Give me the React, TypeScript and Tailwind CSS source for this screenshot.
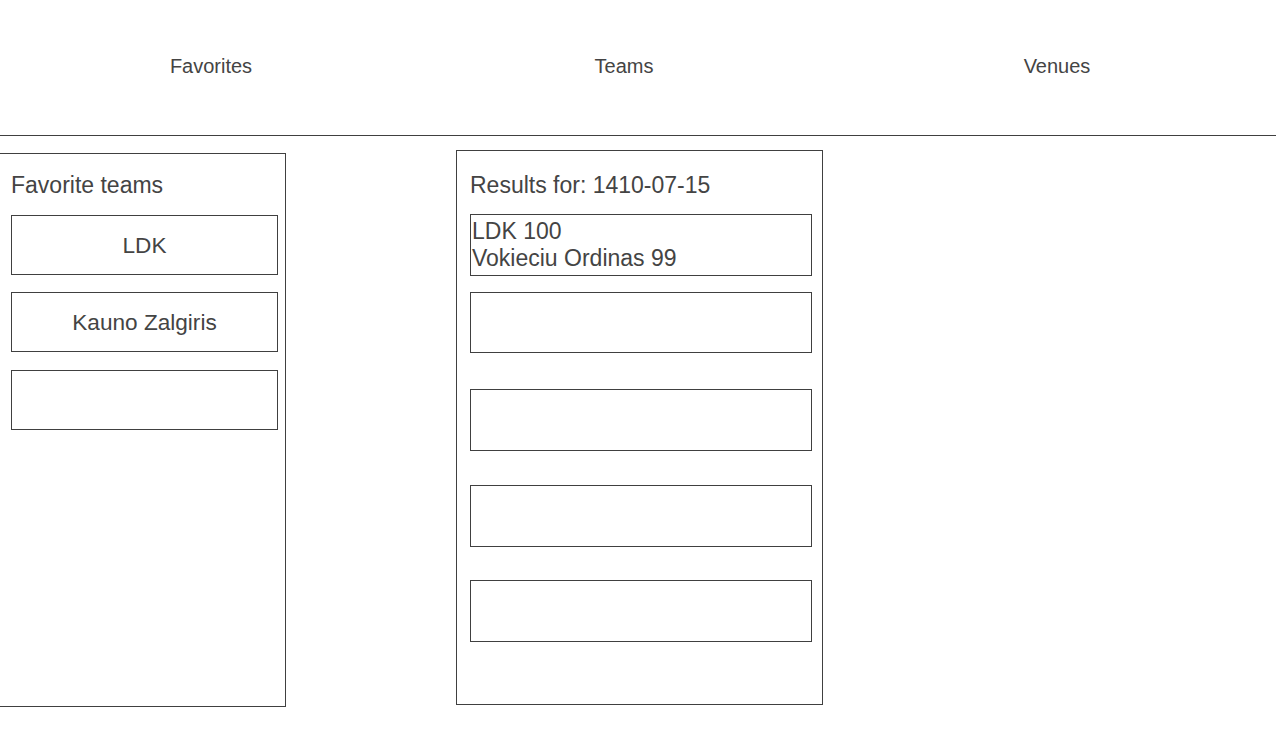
import React from 'react';

const favoriteTeams = [
  { name: 'LDK', className: '' },
  { name: 'Kauno Zalgiris', className: 'mt-[17px]' },
  { name: '', className: 'mt-[18px]' },
];

const results = [
  { lines: ['LDK 100', 'Vokieciu Ordinas 99'], className: 'h-[62px]' },
  { lines: [], className: 'h-[61px] mt-[16px]' },
  { lines: [], className: 'h-[62px] mt-[36px]' },
  { lines: [], className: 'h-[62px] mt-[34px]' },
  { lines: [], className: 'h-[62px] mt-[33px]' },
];

const NavBar = () => (
  <nav className="grid h-[136px] grid-cols-[422px_404px_1fr] border-b border-[#404040] pt-[51px] text-[20px] text-[#444]">
    <a className="text-center">Favorites</a>
    <a className="text-center">Teams</a>
    <a className="pl-[12px] text-center">Venues</a>
  </nav>
);

const FavoritesPanel = () => (
  <section className="mt-[17px] flex h-[554px] w-[286px] flex-col border-y border-r border-[#404040] px-[11px] pt-[18px] text-[23px] text-[#444]">
    <h2 className="mb-[17px] leading-[26px]">Favorite teams</h2>
    <div className="flex flex-col text-[22.6px]">
      {favoriteTeams.map((team, i) => (
        <div
          key={i}
          className={`flex h-[60px] w-[267px] items-center justify-center border border-[#404040] pt-[2px] ${team.className}`}
        >
          {team.name}
        </div>
      ))}
    </div>
  </section>
);

const ResultsPanel = () => (
  <section className="ml-[170px] mt-[14px] flex h-[555px] w-[367px] flex-col border border-[#404040] pl-[13px] pt-[21px] text-[23px] text-[#444]">
    <h2 className="mb-[16px] leading-[26px]">Results for: 1410-07-15</h2>
    {results.map((r, i) => (
      <div
        key={i}
        className={`w-[342px] border border-[#404040] pl-px pt-[3px] leading-[26.7px] ${r.className}`}
      >
        {r.lines.map((line) => (
          <div key={line}>{line}</div>
        ))}
      </div>
    ))}
  </section>
);

export default function App() {
  return (
    <div className="min-h-[750px] w-[1276px] bg-white font-['Liberation_Sans',Arial,sans-serif]">
      <NavBar />
      <div className="flex items-start">
        <FavoritesPanel />
        <ResultsPanel />
      </div>
    </div>
  );
}
